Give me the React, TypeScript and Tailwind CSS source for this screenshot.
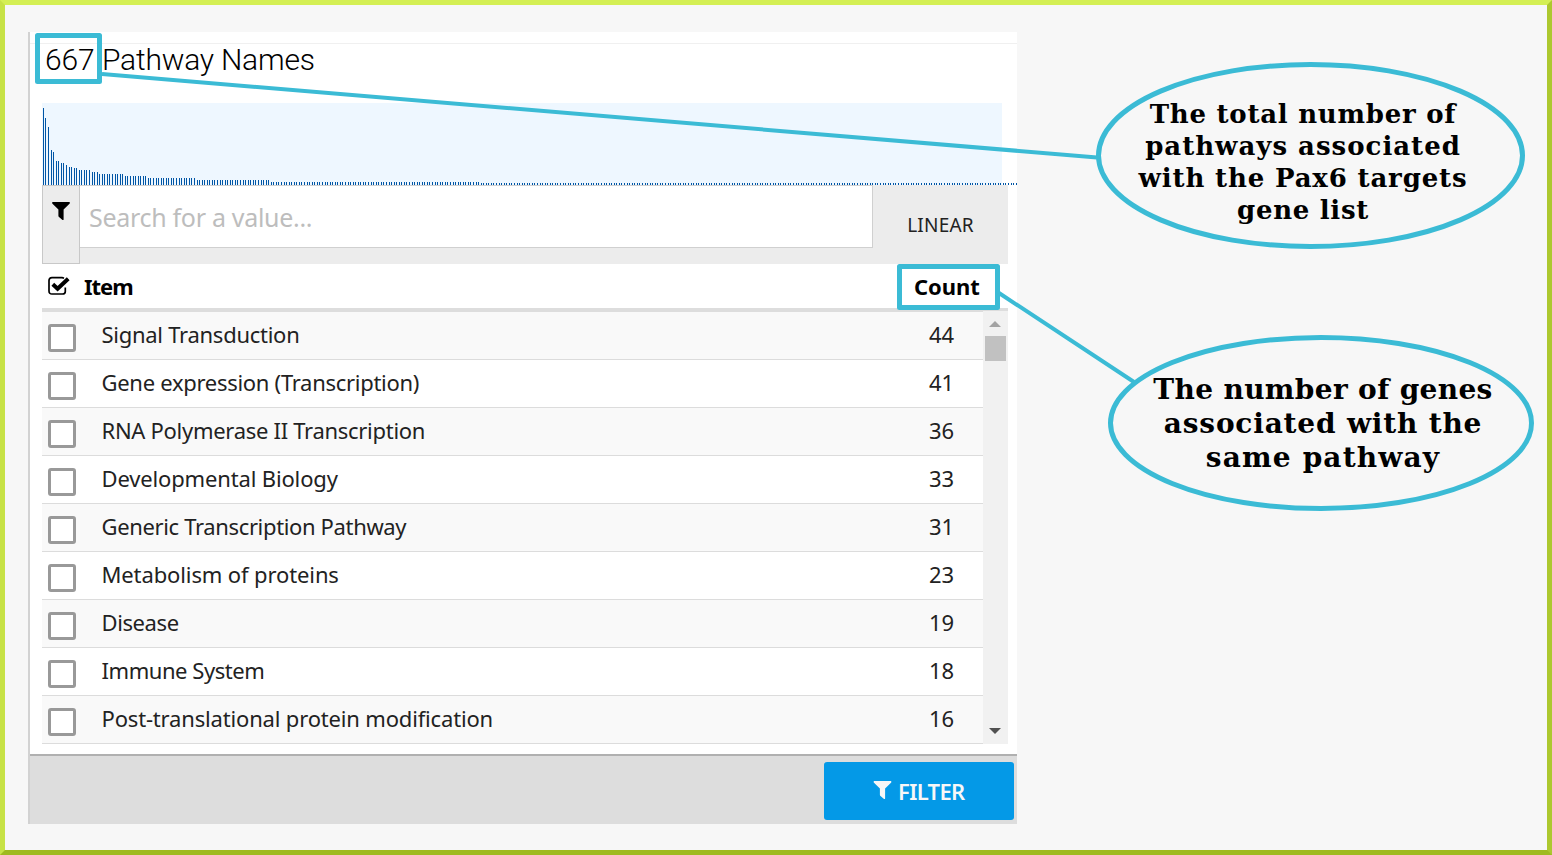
import React from "react";

type Row = { name: string; count: number; spacing: string };

const rows: Row[] = [
  { name: "Signal Transduction", count: 44, spacing: "tracking-[-0.27px]" },
  { name: "Gene expression (Transcription)", count: 41, spacing: "tracking-[-0.29px]" },
  { name: "RNA Polymerase II Transcription", count: 36, spacing: "tracking-[-0.29px]" },
  { name: "Developmental Biology", count: 33, spacing: "tracking-[-0.15px]" },
  { name: "Generic Transcription Pathway", count: 31, spacing: "tracking-[-0.35px]" },
  { name: "Metabolism of proteins", count: 23, spacing: "tracking-[-0.12px]" },
  { name: "Disease", count: 19, spacing: "tracking-[-0.4px]" },
  { name: "Immune System", count: 18, spacing: "tracking-[-0.45px]" },
  { name: "Post-translational protein modification", count: 16, spacing: "tracking-[-0.17px]" },
];

const leadingBars = [77, 67, 58, 35, 33, 24, 24, 22, 22, 20, 18, 18, 17, 17, 15, 15, 15, 15, 15, 13, 13, 13];

function barHeight(index: number, x: number) {
  if (index < leadingBars.length) return leadingBars[index];
  if (x < 124) return 11;
  if (x < 146) return 9;
  if (x < 196) return 7;
  if (x < 271) return 5;
  if (x < 480) return 3;
  return 2;
}

function Histogram() {
  const bars = Array.from({ length: 381 }, (_, i) => {
    const x = Math.floor(43.4 + i * 2.56);
    return { x: x - 42, h: barHeight(i, x) };
  }).filter((b) => b.x < 975);
  return (
    <svg width="975" height="82" className="block shrink-0" shapeRendering="crispEdges">
      <rect width="960" height="82" fill="#eef7ff" />
      {bars.map((b) => (
        <rect key={b.x} x={b.x} y={82 - b.h} width="1" height={b.h} fill="#0055a5" />
      ))}
    </svg>
  );
}

function Funnel({ className }: { className: string }) {
  return (
    <svg viewBox="0 0 18 18" className={className} fill="currentColor">
      <path d="M0.6 0H17.4Q18.4 0.7 17.5 1.7L11.6 7.6V17.4Q11.2 18.5 10.2 17.8L7 15Q6.4 14.5 6.4 13.8V7.6L0.5 1.7Q-0.4 0.7 0.6 0Z" />
    </svg>
  );
}

export default function App() {
  return (
    <div className="relative flex h-[855px] w-[1552px] overflow-hidden border-[5px] border-t-[#d4ef54] border-r-[#adc82f] border-b-[#9fba20] border-l-[#c7e246] bg-[#f7f7f7] pt-[27px] pl-[23px] font-['Noto_Sans',sans-serif]">
      <main className="flex h-[792px] w-[989px] border-l-2 border-l-[#d2d2d2]">
        <div className="flex w-[987px] flex-col bg-white">
          <div className="h-3 shrink-0 rounded-tl border-b border-[#f0f0f0]" />
          <h1 className="flex h-[59px] shrink-0 font-['Roboto',sans-serif] text-[30px] leading-[31px] font-light text-black">
            <span className="w-[72px] pl-[15px] tracking-[-0.2px]">667</span>
            <span className="tracking-[-0.2px] whitespace-nowrap">Pathway Names</span>
          </h1>
          <div className="flex h-[82px] shrink-0 pl-3">
            <Histogram />
          </div>
          <div className="ml-3 flex h-[79px] w-[966px] shrink-0 bg-[#ececec]">
            <div className="flex w-[38px] justify-center border border-[#c8c8c8] pt-4">
              <Funnel className="h-[18px] w-[18px] text-black" />
            </div>
            <div className="flex h-[63px] w-[793px] items-center border-t border-r border-b border-[#d0d0d0] bg-white pl-[9px] text-[25px] whitespace-nowrap text-[#bdbdbd]">
              <span className="mt-0.5 tracking-[-0.3px]">Search for a value...</span>
            </div>
            <div className="flex w-[135px] justify-center text-[19px] leading-[80px] text-[#222]">
              <span className="tracking-[0.2px]">LINEAR</span>
            </div>
          </div>
          <div className="ml-3 flex h-12 w-[966px] shrink-0 border-b-4 border-[#ddd] text-[22px] leading-[45px] font-bold text-black">
            <svg viewBox="0 0 22 20" className="mt-[12px] ml-[6px] h-5 w-[22px]" fill="none" stroke="currentColor">
              <path d="M17.3 11.5V15.5Q17.3 18 14.5 18H4Q1 18 1 15V4.5Q1 1.7 4 1.7H14Q15 1.7 16 2.2" strokeWidth="1.7" />
              <path d="M4.8 8.3L9.6 12.8L20.2 2.8" strokeWidth="4" />
            </svg>
            <span className="ml-[14px] w-[830px] tracking-[-1px]">Item</span>
            <span className="tracking-[-0.05px]">Count</span>
          </div>
          <div className="ml-3 flex h-[432px] w-[966px] shrink-0">
            <div className="w-[941px]">
              {rows.map((row) => (
                <div key={row.name} className="flex h-12 border-b border-[#dcdcdc] pl-[6px] text-[22px] leading-[44px] text-[#222] odd:bg-[#f9f9f9]">
                  <span className="mt-3 h-7 w-7 shrink-0 rounded-[3px] border-3 border-[#999] bg-white" />
                  <span className="ml-[25.5px] w-[800px] whitespace-nowrap">
                    <span className={row.spacing}>{row.name}</span>
                  </span>
                  <span className="w-[80px] text-center">{row.count}</span>
                </div>
              ))}
            </div>
            <div className="-mt-px flex w-[25px] flex-col items-center bg-[#f1f1f1]">
              <svg width="12" height="6" className="mt-[10px] mr-px"><path d="M6 0L12 6H0Z" fill="#a3a3a3" /></svg>
              <div className="mt-[9px] h-[25px] w-[21px] bg-[#c1c1c1]" />
              <svg width="12" height="6" className="mt-auto mr-px mb-[10px]"><path d="M0 0H12L6 6Z" fill="#505050" /></svg>
            </div>
          </div>
          <footer className="mt-[10px] flex h-[70px] shrink-0 justify-end border-t-2 border-[#b0b0b0] bg-[#ddd] pt-[6px] pr-[3px]">
            <button className="flex h-[58px] w-[190px] rounded-[3px] bg-[#0499e7] pl-[49px] text-[22px] leading-[58px] font-semibold text-[#f7f7f7]">
              <Funnel className="mt-[19px] h-[18px] w-[19px]" />
              <span className="ml-[6px] tracking-[-0.65px]">FILTER</span>
            </button>
          </footer>
        </div>
      </main>

      <svg className="pointer-events-none absolute -top-[5px] -left-[5px]" width="1552" height="855" fill="none" stroke="#3bbbd5">
        <rect x="37.5" y="35.5" width="62" height="46" strokeWidth="5" strokeLinejoin="round" />
        <rect x="899.5" y="266.5" width="98" height="41" strokeWidth="5" strokeLinejoin="round" />
        <path d="M102 74L1097 157.5M999 293L1134 382" strokeWidth="4" />
        <ellipse cx="1310.5" cy="155.5" rx="212" ry="91" strokeWidth="5" />
        <ellipse cx="1321" cy="423" rx="210.5" ry="85.5" strokeWidth="5" />
      </svg>

      <p className="absolute top-[93px] left-[1098px] w-[400px] text-center font-['DejaVu_Serif',serif] text-[26px] leading-8 font-bold whitespace-nowrap text-black">
        <span className="tracking-[0.75px]">The total number of</span><br />
        <span className="tracking-[1px]">pathways associated</span><br />
        <span className="tracking-[0.85px]">with the Pax6 targets</span><br />
        <span className="tracking-[0.7px]">gene list</span>
      </p>
      <p className="absolute top-[368px] left-[1118px] w-[400px] text-center font-['DejaVu_Serif',serif] text-[28px] leading-[34px] font-bold whitespace-nowrap text-black">
        <span className="tracking-[0.35px]">The number of genes</span><br />
        <span className="tracking-[0.8px]">associated with the</span><br />
        <span className="tracking-[1.15px]">same pathway</span>
      </p>
    </div>
  );
}
